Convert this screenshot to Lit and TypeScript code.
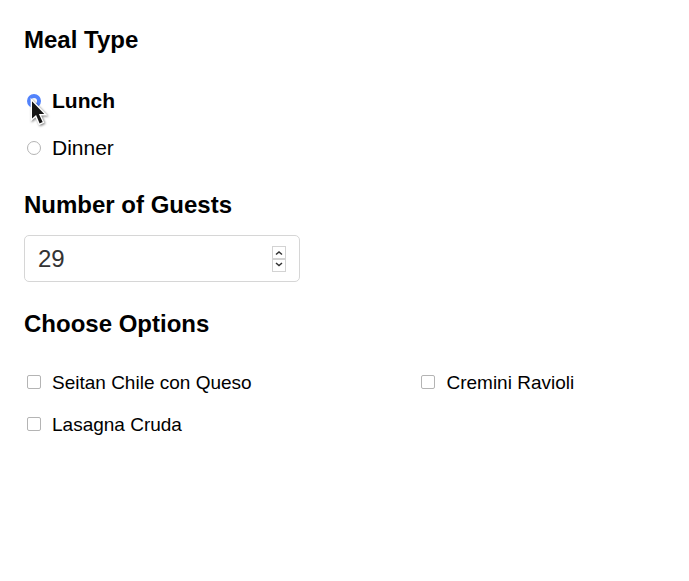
import { LitElement, html, css } from "lit";
import { customElement, state } from "lit/decorators.js";

@customElement("app-root")
export class AppRoot extends LitElement {
  @state() private meal = "Lunch";
  @state() private guests = 29;

  private readonly meals = ["Lunch", "Dinner"];
  private readonly options = ["Seitan Chile con Queso", "Cremini Ravioli", "Lasagna Cruda"];

  static styles = css`
    :host {
      display: block;
      padding: 26px 24px;
      background: #fff;
      color: #000;
      font-family: "Liberation Sans", Arial, sans-serif;
    }
    * {
      box-sizing: border-box;
    }
    .title {
      margin: 0;
      font-size: 24px;
      line-height: 28px;
      font-weight: 700;
    }
    .meals {
      display: flex;
      flex-direction: column;
      gap: 23px;
      margin: 35px 0 31px;
    }
    .choice {
      display: flex;
      align-items: center;
      gap: 11px;
      padding-left: 3px;
    }
    .meal {
      font-size: 21px;
      line-height: 24px;
    }
    .option {
      align-items: flex-start;
      font-size: 19px;
      line-height: 22px;
    }
    .selected {
      font-weight: 700;
    }
    .mark {
      position: relative;
      display: flex;
    }
    .box {
      appearance: none;
      width: 14px;
      height: 14px;
      margin: 0;
      border: 1px solid #b4b4b4;
      border-radius: 2px;
      background: #fff;
    }
    .option .box {
      margin-top: 3px;
    }
    .round {
      border-radius: 50%;
    }
    .round:checked {
      border: 4px solid #5283fc;
    }
    .pointer {
      position: absolute;
      left: 3px;
      top: 4px;
      width: 20px;
      height: 28px;
      overflow: visible;
      pointer-events: none;
      filter: drop-shadow(1px 1px 1px rgba(0, 0, 0, 0.5));
    }
    .guests {
      display: flex;
      align-items: center;
      width: 276px;
      max-width: 100%;
      height: 47px;
      margin: 16px 0 28px;
      padding: 0 13px;
      border: 1px solid #d6d6d6;
      border-radius: 5px;
    }
    .count {
      appearance: textfield;
      flex: 1;
      min-width: 0;
      padding: 0;
      border: 0;
      outline: 0;
      background: none;
      color: #333;
      font: 24px/28px "Liberation Sans", Arial, sans-serif;
    }
    .count::-webkit-inner-spin-button {
      appearance: none;
      margin: 0;
    }
    .steps {
      display: flex;
      flex-direction: column;
    }
    .step {
      display: flex;
      align-items: center;
      justify-content: center;
      width: 14px;
      height: 13px;
      padding: 0;
      border: 1px solid #d3d3d3;
      background: #fff;
    }
    .chevron {
      width: 8px;
      height: 7px;
      fill: none;
      stroke: #333;
      stroke-width: 1.5;
    }
    .options {
      display: grid;
      grid-template-columns: 8fr 5fr;
      row-gap: 20px;
      margin-top: 34px;
    }
  `;

  private pointer() {
    return html`<svg class="pointer" viewBox="0 0 20 28" aria-hidden="true">
      <path
        d="M1.300 1.500V22L5.800 18.200L9.200 26.300L13.500 24.300L10 16.800H16Z"
        fill="#151515"
        stroke="#fff"
        stroke-width="1.400"
      />
    </svg>`;
  }

  render() {
    return html`
      <h2 class="title" id="meal-title">Meal Type</h2>
      <div class="meals" role="radiogroup" aria-labelledby="meal-title">
        ${this.meals.map(
          (name) => html`<label class="choice meal ${this.meal === name ? "selected" : ""}">
            <span class="mark">
              <input
                class="box round"
                type="radio"
                name="meal"
                .checked=${this.meal === name}
                @change=${() => (this.meal = name)}
              />
              ${name === "Lunch" ? this.pointer() : ""}
            </span>
            ${name}
          </label>`
        )}
      </div>
      <h2 class="title"><label for="guests">Number of Guests</label></h2>
      <div class="guests">
        <input
          class="count"
          id="guests"
          type="number"
          min="1"
          .value=${String(this.guests)}
          @input=${(e: Event) => (this.guests = Number((e.target as HTMLInputElement).value))}
        />
        <div class="steps">
          <button class="step" type="button" aria-label="More guests" @click=${() => this.guests++}>
            <svg class="chevron" viewBox="0 0 8 7"><path d="M1 5.500L4 3L7 5.500" /></svg>
          </button>
          <button
            class="step"
            type="button"
            aria-label="Fewer guests"
            @click=${() => (this.guests = Math.max(1, this.guests - 1))}
          >
            <svg class="chevron" viewBox="0 0 8 7"><path d="M1 1L4 3.500L7 1" /></svg>
          </button>
        </div>
      </div>
      <h2 class="title" id="options-title">Choose Options</h2>
      <div class="options" role="group" aria-labelledby="options-title">
        ${this.options.map(
          (name) => html`<label class="choice option">
            <input class="box" type="checkbox" name="option" value=${name} />${name}
          </label>`
        )}
      </div>
    `;
  }
}
